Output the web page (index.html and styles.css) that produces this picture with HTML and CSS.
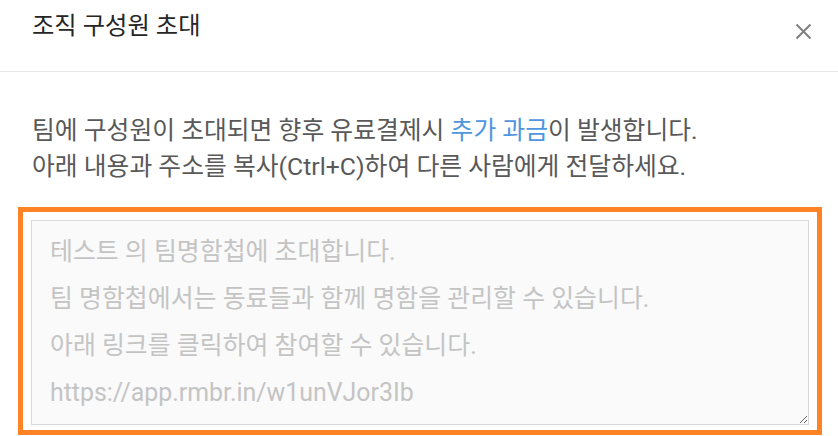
FILE: index.html
```html
<!DOCTYPE html>
<html lang="ko">
<head>
<meta charset="utf-8">
<title>조직 구성원 초대</title>
<link rel="stylesheet" href="styles.css">
</head>
<body>
<div class="modal">
  <header class="modal-header">
    <h1 class="modal-title">조직 구성원 초대</h1>
    <button class="close-btn" aria-label="닫기">
      <svg width="17" height="17" viewBox="0 0 17 17"><path d="M1.5 1.5 L15.5 15.5 M15.5 1.5 L1.5 15.5" stroke="#7f7f7f" stroke-width="2" fill="none"/></svg>
    </button>
  </header>
  <div class="modal-body">
    <p class="notice">팀에 구성원이 초대되면 향후 유료결제시 <span class="accent">추가 과금</span>이 발생합니다.<br>아래 내용과 주소를 복사(Ctrl+C)하여 다른 사람에게 전달하세요.</p>
    <div class="highlight">
      <textarea class="invite-text" readonly>테스트 의 팀명함첩에 초대합니다.
팀 명함첩에서는 동료들과 함께 명함을 관리할 수 있습니다.
아래 링크를 클릭하여 참여할 수 있습니다.
https://app.rmbr.in/w1unVJor3Ib</textarea>
    </div>
  </div>
</div>
</body>
</html>
```

FILE: styles.css
```css
html, body {
  margin: 0;
  padding: 0;
  background: #ffffff;
}
body {
  font-family: Roboto, "Noto Sans CJK KR", sans-serif;
  width: 838px;
  height: 436px;
  overflow: hidden;
}
.modal-header {
  box-sizing: border-box;
  height: 72px;
  border-bottom: 1px solid #e8e8e8;
  display: flex;
  align-items: flex-start;
  justify-content: space-between;
  padding: 9px 26px 0 32px;
}
.modal-title {
  margin: 0;
  font-size: 24.3px;
  font-weight: 400;
  line-height: 34px;
  color: #262626;
}
.close-btn {
  border: 0;
  background: none;
  padding: 0;
  margin-top: 14px;
  width: 17px;
  height: 17px;
  display: flex;
  cursor: pointer;
}
.modal-body {
  padding: 41px 16px 0 18px;
}
.notice {
  margin: 0 0 22px 14px;
  font-size: 24.8px;
  line-height: 36px;
  color: #595959;
}
.accent {
  color: #4f96e0;
}
.highlight {
  width: 804px;
  box-sizing: border-box;
  border: 5px solid #fe8326;
  padding: 8px 8px 5px 8px;
}
.invite-text {
  display: block;
  box-sizing: border-box;
  width: 100%;
  height: 205px;
  margin: 0;
  border: 1px solid #d9d9d9;
  background: #fafafa;
  padding: 7px 18px;
  font-family: Roboto, "Noto Sans CJK KR", sans-serif;
  font-size: 24.9px;
  line-height: 47px;
  color: #c4c4c4;
  resize: both;
  outline: none;
  overflow: hidden;
}
```
